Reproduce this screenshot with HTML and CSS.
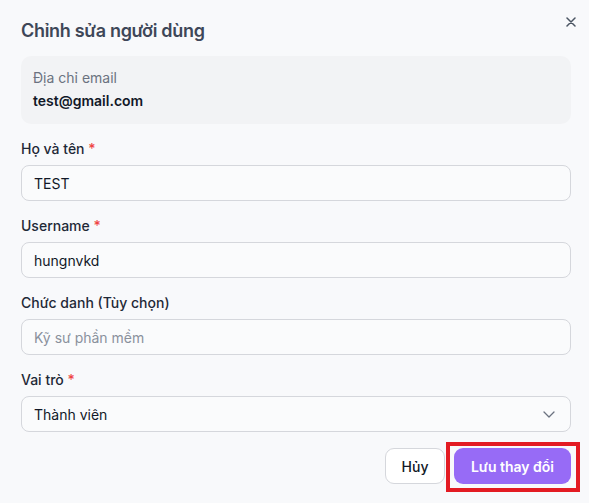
FILE: index.html
```html
<!DOCTYPE html>
<html lang="vi">
<head>
<meta charset="utf-8">
<title>Chỉnh sửa người dùng</title>
<link rel="stylesheet" href="styles.css">
</head>
<body>
<div class="dialog">
  <button class="close" aria-label="Đóng">
    <svg width="10" height="10" viewBox="0 0 10 10"><path d="M1 1 L9 9 M9 1 L1 9" stroke="#4b5563" stroke-width="1.5" stroke-linecap="round" fill="none"/></svg>
  </button>
  <h2 class="title">Chỉnh sửa người dùng</h2>
  <div class="info">
    <div class="info-label">Địa chỉ email</div>
    <div class="info-value">test@gmail.com</div>
  </div>
  <div class="fields">
    <div class="field">
      <label class="label">Họ và tên <span class="req">*</span></label>
      <div class="input">TEST</div>
    </div>
    <div class="field">
      <label class="label">Username <span class="req">*</span></label>
      <div class="input">hungnvkd</div>
    </div>
    <div class="field">
      <label class="label">Chức danh (Tùy chọn)</label>
      <div class="input placeholder">Kỹ sư phần mềm</div>
    </div>
    <div class="field">
      <label class="label">Vai trò <span class="req">*</span></label>
      <div class="input select">
        <span>Thành viên</span>
        <svg width="12" height="7" viewBox="0 0 12 7"><path d="M1 1 L6 6 L11 1" stroke="#6b7280" stroke-width="1.3" stroke-linecap="round" stroke-linejoin="round" fill="none"/></svg>
      </div>
    </div>
  </div>
  <div class="footer">
    <button class="btn btn-cancel">Hủy</button>
    <button class="btn btn-save">Lưu thay đổi</button>
  </div>
</div>
</body>
</html>
```

FILE: styles.css
```css
* { box-sizing: border-box; }
html, body {
  margin: 0;
  padding: 0;
  background: #f8f9fb;
  font-family: Inter, "Noto Sans", sans-serif;
  color: #111827;
}
.dialog {
  position: relative;
  width: 589px;
  height: 503px;
  padding: 17px 18px 0 21px;
}
.close {
  position: absolute;
  top: 17px;
  left: 566px;
  width: 10px;
  height: 10px;
  padding: 0;
  border: 0;
  background: none;
  display: flex;
}
.title {
  margin: 0 0 11px;
  font-size: 18px;
  line-height: 28px;
  font-weight: 600;
  color: #3e4758;
  letter-spacing: -0.3px;
}
.info {
  background: #f2f3f5;
  border-radius: 10px;
  padding: 12px 12px 13px;
}
.info-label {
  font-size: 14px;
  line-height: 20px;
  color: #6b7280;
  margin-bottom: 3px;
}
.info-value {
  font-size: 14px;
  line-height: 20px;
  font-weight: 600;
  color: #111827;
}
.fields {
  margin-top: 15px;
  display: flex;
  flex-direction: column;
  gap: 15px;
}
.field {
  display: flex;
  flex-direction: column;
  gap: 6px;
}
.label {
  font-size: 14px;
  line-height: 20px;
  font-weight: 500;
  color: #1f2937;
}
.req { color: #ef4444; }
.input {
  height: 36px;
  border: 1px solid #d5d7dc;
  border-radius: 8px;
  background: #fafbfc;
  padding: 0 12px;
  display: flex;
  align-items: center;
  font-size: 14px;
  color: #111827;
}
.placeholder { color: #8a919c; }
.select {
  justify-content: space-between;
  padding-right: 15px;
}
.footer {
  margin-top: 16px;
  display: flex;
  justify-content: flex-end;
  gap: 9px;
}
.btn {
  height: 36px;
  border-radius: 9px;
  font-family: Inter, "Noto Sans", sans-serif;
  font-size: 14px;
  padding: 0 16px;
  cursor: pointer;
}
.btn-cancel {
  background: #ffffff;
  border: 1px solid #d5d7dc;
  color: #111827;
  font-weight: 500;
  width: 60px;
  padding: 0;
}
.btn-save {
  position: relative;
  background: #976bf6;
  border: 0;
  color: #ffffff;
  font-weight: 600;
  width: 117px;
  padding: 0;
}
.btn-save::after {
  content: "";
  position: absolute;
  top: -6px;
  left: -8px;
  right: -9px;
  bottom: -8px;
  border: 4px solid #e31b23;
  pointer-events: none;
}
```
